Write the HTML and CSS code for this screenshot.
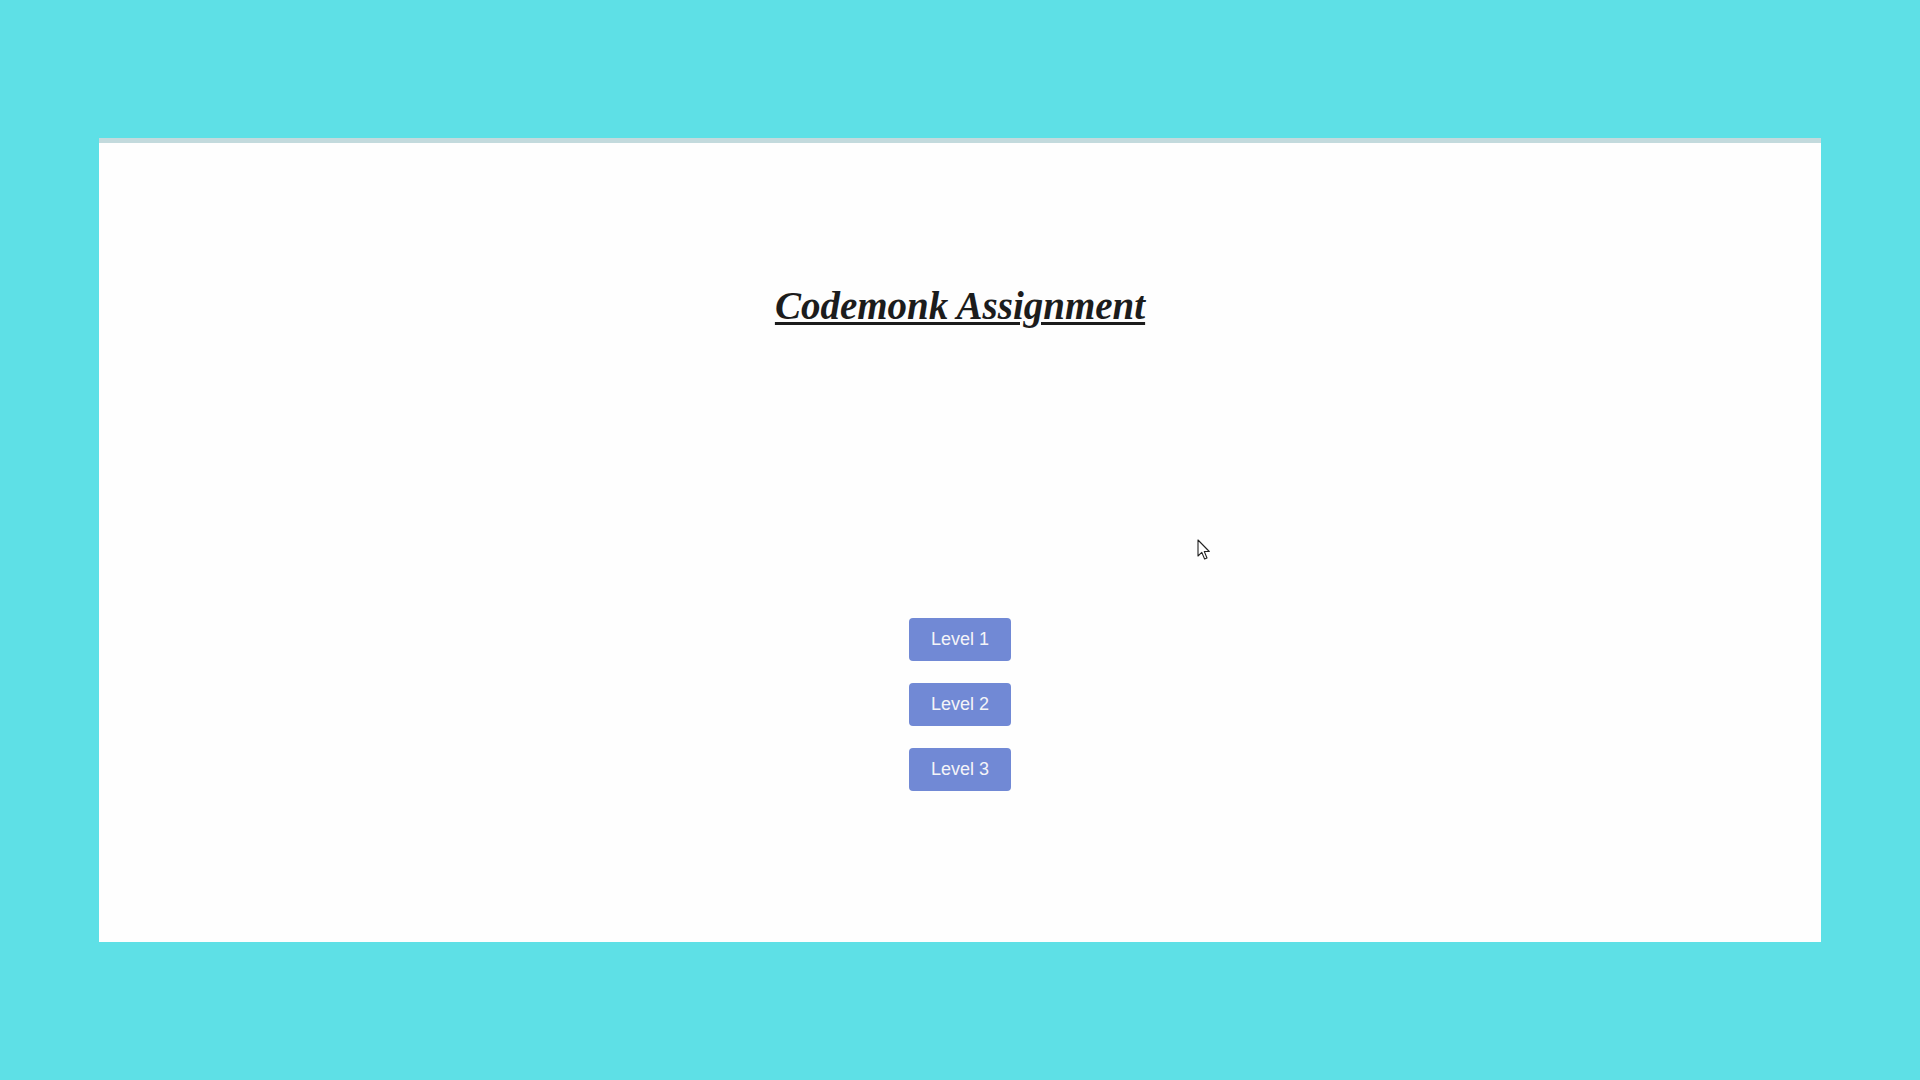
FILE: index.html
```html
<!DOCTYPE html>
<html lang="en">
<head>
<meta charset="utf-8">
<title>Codemonk Assignment</title>
<link rel="stylesheet" href="styles.css">
</head>
<body>
<main class="panel">
  <h1 class="title">Codemonk Assignment</h1>
  <div class="levels">
    <button class="level-btn">Level 1</button>
    <button class="level-btn">Level 2</button>
    <button class="level-btn">Level 3</button>
  </div>
</main>
<svg class="cursor" width="14" height="22" viewBox="0 0 14 22">
  <path d="M1 1 L1 17 L4.8 13.4 L7.6 20 L10 19 L7.3 12.5 L12.3 12.5 Z" fill="#fff" stroke="#222" stroke-width="1.1" stroke-linejoin="round"/>
</svg>
</body>
</html>
```
FILE: styles.css
```css
html, body {
  margin: 0;
  padding: 0;
}
body {
  background: #5ee0e6;
  width: 1920px;
  height: 1080px;
  overflow: hidden;
  position: relative;
}
.panel {
  margin: 138px 0 0 99px;
  width: 1722px;
  height: 804px;
  box-sizing: border-box;
  border-top: 5px solid #c3dadd;
  background: #fefefe;
  display: flex;
  flex-direction: column;
  align-items: center;
  padding-top: 140px;
}
.title {
  margin: 0;
  font-family: "Liberation Serif", "Times New Roman", serif;
  font-weight: 700;
  font-style: italic;
  font-size: 39px;
  line-height: 46px;
  color: #1c1c1c;
  text-decoration: underline;
  text-decoration-thickness: 3px;
  text-underline-offset: 3px;
}
.levels {
  margin-top: 289px;
  display: flex;
  flex-direction: column;
  gap: 22px;
}
.level-btn {
  width: 102px;
  height: 43px;
  border: none;
  border-radius: 4px;
  background: #7189d5;
  color: #f4f4f8;
  font-family: "Liberation Sans", Arial, sans-serif;
  font-size: 18px;
  padding: 0;
  cursor: pointer;
}
.cursor {
  position: absolute;
  left: 1197px;
  top: 539px;
}
```
